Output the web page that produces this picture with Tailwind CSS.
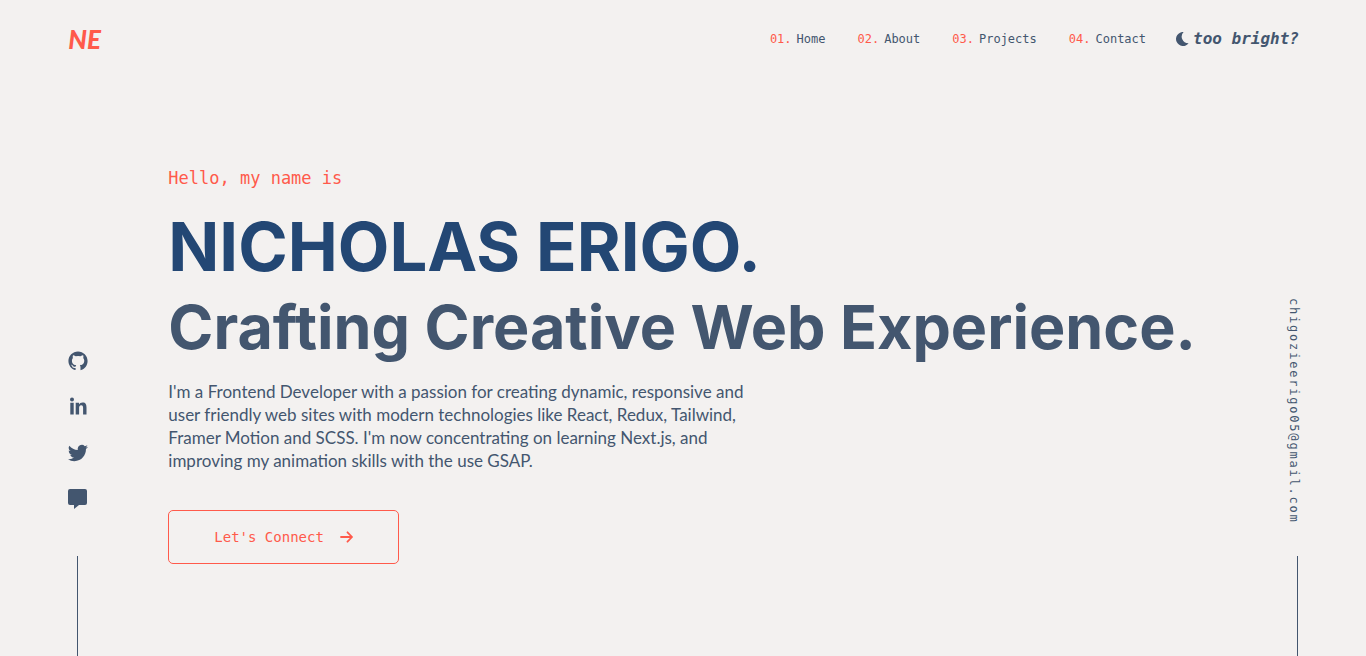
<!DOCTYPE html>
<html lang="en">
<head>
<meta charset="utf-8">
<meta name="viewport" content="width=device-width, initial-scale=1">
<title>Nicholas Erigo</title>
<script src="https://cdn.jsdelivr.net/npm/@tailwindcss/browser@4"></script>
</head>
<body class="flex min-h-screen flex-col bg-[#f3f1f0] font-['Inter','Liberation_Sans',sans-serif] text-[#43566f]">
<header class="flex h-[78px] items-center justify-between pr-[67px] pl-[5%]">
  <a href="#" class="font-['Lato',sans-serif] text-[26px] leading-8 font-black italic text-[#ff5a4b]">NE</a>
  <div class="flex items-center gap-[30px]">
    <nav class="flex gap-8 font-['DejaVu_Sans_Mono',monospace] text-[12px] leading-4">
      <a href="#home" class="flex gap-[5px]"><span class="text-[#ff5a4b]">01.</span><span>Home</span></a>
      <a href="#about" class="flex gap-[5px]"><span class="text-[#ff5a4b]">02.</span><span>About</span></a>
      <a href="#projects" class="flex gap-[5px]"><span class="text-[#ff5a4b]">03.</span><span>Projects</span></a>
      <a href="#contact" class="flex gap-[5px]"><span class="text-[#ff5a4b]">04.</span><span>Contact</span></a>
    </nav>
    <button type="button" class="flex items-center gap-1 font-['DejaVu_Sans_Mono',monospace] text-[16px] leading-5 font-bold italic">
      <svg class="h-[14px] w-[13px]" viewBox="0 0 13 14" fill="currentColor" aria-hidden="true"><path d="M7.600 0A7 7 0 1 0 12.600 11.200A6.600 6.600 0 0 1 7.600 0Z"/></svg>
      <span>too bright?</span>
    </button>
  </div>
</header>
<div class="flex grow px-[5%]">
  <aside class="flex w-[19px] shrink-0 flex-col items-center justify-end">
    <div class="mb-[47px] flex flex-col gap-[26px]">
      <a href="#github" aria-label="GitHub"><svg class="size-5" viewBox="0 0 24 24" fill="currentColor"><path d="M12 .5C5.600.5.5 5.600.5 12c0 5 3.300 9.400 7.800 10.900.6.1.8-.2.8-.5v-2.100c-3.200.7-3.900-1.400-3.900-1.400-.5-1.300-1.300-1.700-1.300-1.700-1-.7.1-.7.1-.7 1.200.1 1.800 1.200 1.800 1.200 1 1.800 2.700 1.300 3.400 1 .1-.8.4-1.300.7-1.600-2.600-.3-5.200-1.300-5.200-5.700 0-1.300.4-2.300 1.200-3.100-.1-.3-.5-1.500.1-3.100 0 0 1-.3 3.200 1.200a11 11 0 0 1 5.800 0c2.200-1.500 3.200-1.200 3.200-1.200.6 1.600.2 2.800.1 3.100.7.8 1.200 1.800 1.200 3.100 0 4.400-2.700 5.400-5.300 5.700.4.4.8 1.100.8 2.100v3.200c0 .3.200.7.8.5 4.500-1.500 7.700-5.800 7.700-10.900C23.500 5.600 18.400.5 12 .5Z"/></svg></a>
      <a href="#linkedin" aria-label="LinkedIn"><svg class="size-5" viewBox="0 0 20 20" fill="currentColor"><circle cx="4" cy="2.500" r="2"/><path d="M2.300 5.800h3.400V17.500H2.300zM7.700 5.800H11v1.600c.6-1.100 1.900-1.900 3.600-1.900 3.200 0 3.900 2.100 3.900 5v7h-3.400v-6.300c0-1.500-.1-3-1.900-3-1.800 0-2.100 1.400-2.100 2.900v6.400H7.700z"/></svg></a>
      <a href="#twitter" aria-label="Twitter"><svg class="size-5" viewBox="0 0 24 24" fill="currentColor"><path d="M23.950 4.570a10 10 0 0 1-2.820.770 4.960 4.960 0 0 0 2.160-2.720c-.95.550-2 .950-3.130 1.180a4.920 4.920 0 0 0-8.380 4.480C7.690 8.090 4.070 6.130 1.640 3.160a4.930 4.930 0 0 0 1.520 6.570 4.900 4.900 0 0 1-2.230-.61v.06a4.920 4.920 0 0 0 3.950 4.830 5 5 0 0 1-2.210.08 4.940 4.940 0 0 0 4.600 3.420A9.870 9.870 0 0 1 0 19.540a14 14 0 0 0 7.550 2.210c9.050 0 14-7.500 14-13.980 0-.21 0-.42-.02-.63a9.940 9.940 0 0 0 2.460-2.550z"/></svg></a>
      <a href="#message" aria-label="Message"><svg class="size-5" viewBox="0 0 20 20" fill="currentColor"><path d="M2 0h15A2 2 0 0 1 19 2v12a2 2 0 0 1-2 2H11l-5 4v-4H2A2 2 0 0 1 0 14v-12A2 2 0 0 1 2 0z"/></svg></a>
    </div>
    <div class="h-[100px] w-px bg-[#43566f]"></div>
  </aside>
  <main class="min-w-0 grow pt-[88px] pr-20 pl-[81px]">
    <p class="font-['DejaVu_Sans_Mono',monospace] text-[17px] leading-6 text-[#ff5a4b]">Hello, my name is</p>
    <h1 class="mt-[17px] text-[67px] leading-[80px] font-bold text-[#234774]">NICHOLAS ERIGO.</h1>
    <h2 class="text-[61px] leading-[80px] font-bold whitespace-nowrap">Crafting Creative Web Experience.</h2>
    <p class="mt-[13px] max-w-[580px] font-['Lato',sans-serif] text-[17px] leading-[23px]">I'm a Frontend Developer with a passion for creating dynamic, responsive and user friendly web sites with modern technologies like React, Redux, Tailwind, Framer Motion and SCSS. I'm now concentrating on learning Next.js, and improving my animation skills with the use GSAP.</p>
    <a href="#contact" class="mt-[38px] inline-flex h-[54px] items-center gap-4 rounded-[5px] border border-[#ff5a4b] px-[45px] font-['DejaVu_Sans_Mono',monospace] text-[14px] text-[#ff5a4b]">Let's Connect
      <svg class="h-3 w-[13px]" viewBox="0 0 13 12" fill="none" stroke="currentColor" stroke-width="1.800" stroke-linecap="round" stroke-linejoin="round" aria-hidden="true"><path d="M1 6h11M7.500 1.300L12 6l-4.500 4.700"/></svg>
    </a>
  </main>
  <aside class="flex w-2 shrink-0 flex-col items-center justify-end">
    <a href="mailto:chigozieerigo05@gmail.com" class="mb-8 font-['DejaVu_Sans_Mono',monospace] text-[12px] leading-4 tracking-[0.15em] [writing-mode:vertical-rl]">chigozieerigo05@gmail.com</a>
    <div class="h-[100px] w-px self-end bg-[#43566f]"></div>
  </aside>
</div>
</body>
</html>
